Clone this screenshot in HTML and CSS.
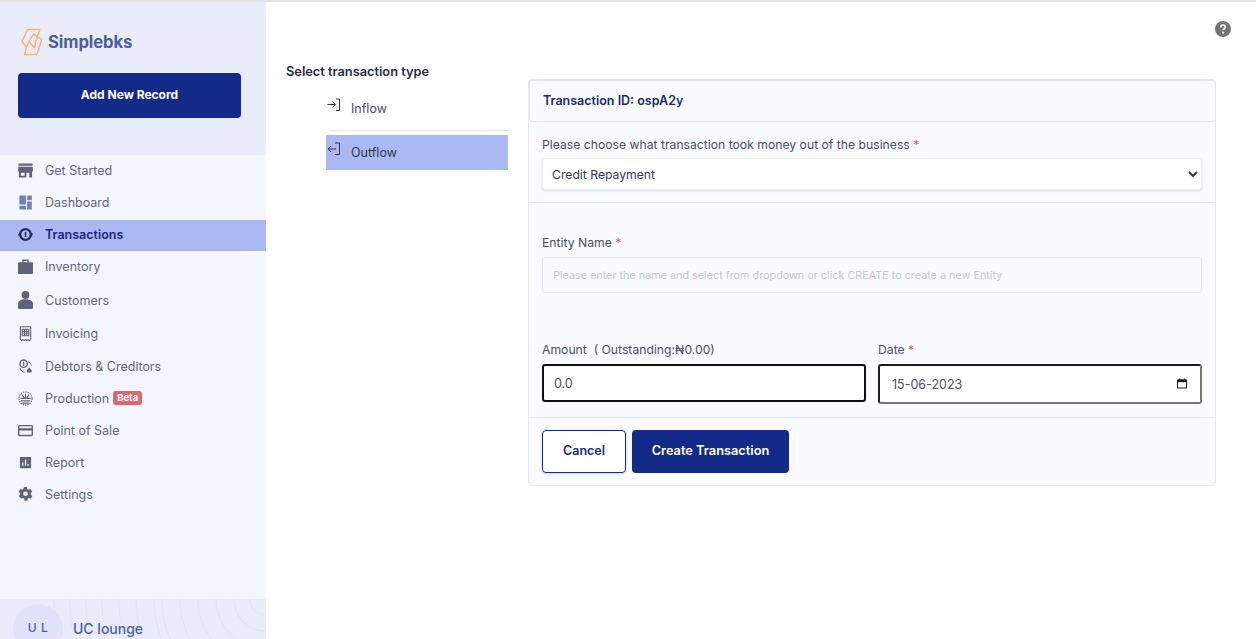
FILE: index.html
```html
<!DOCTYPE html>
<html lang="en">
<head>
<meta charset="utf-8">
<title>Simplebks</title>
<link rel="stylesheet" href="styles.css">
</head>
<body>
<div class="app">
  <aside class="sidebar">
    <div class="side-head">
      <div class="brand">
        <svg class="brand-mark" viewBox="0 0 22 28" fill="none" stroke="#f6b26f" stroke-width="1.400" stroke-linejoin="round"><path d="M6.500 1.500H18.800L15.300 11.500"/><path d="M6.500 1.500L1 13.500 5.500 19 8 13.500 12.500 6 20.700 11.500 15.800 26.500H3.500L5.500 19"/><path d="M8 13.500L13.500 20 15.300 11.500"/></svg>
        <span class="brand-name">Simplebks</span>
      </div>
      <button class="add-btn" type="button">Add New Record</button>
    </div>
    <nav class="nav">
      <a class="nav-item"><svg class="ico" viewBox="0 0 16 16"><path fill="#5f6378" d="M0.500 0.500h15v2.500H.5zM0.300 4h15.400L16 9h-1v6.500h-3V10.500H9v5H1V9H0zM3 10.500v3h4v-3z"/></svg>Get Started</a>
      <a class="nav-item"><svg class="ico" viewBox="0 0 16 16"><path fill="#6f80bd" d="M1.500 0.500h7v9.500h-7zM9.700 0.500h5v5h-5zM9.700 7h5v8.500h-5zM1.500 11.500h7v4h-7z"/></svg>Dashboard</a>
      <a class="nav-item active"><svg class="ico" viewBox="0 0 16 16"><circle cx="8" cy="8" r="5.700" fill="none" stroke="#282d52" stroke-width="2.400"/><path fill="#282d52" d="M-.3 9l2-3.500L3.700 9zM12.300 7l2 3.500L16.300 7zM7.200 5.300h1.600v5.400H7.200z"/></svg>Transactions</a>
      <a class="nav-item"><svg class="ico" viewBox="1 1 14 14"><path fill="#5f6378" d="M5 1.500h6V4h3a1 1 0 0 1 1 1v9a1 1 0 0 1-1 1H2a1 1 0 0 1-1-1V5a1 1 0 0 1 1-1h3zM6.300 2.800V4h3.400V2.800z"/></svg>Inventory</a>
      <a class="nav-item nav-person"><svg class="ico ico-person" viewBox="0 0 15 18"><circle cx="7.500" cy="4" r="3.900" fill="#5f6378"/><path fill="#5f6378" d="M0 13c0-3 3-4.700 7.500-4.700S15 10 15 13v3.500a1.500 1.500 0 0 1-1.500 1.500h-12A1.500 1.500 0 0 1 0 16.500z"/></svg>Customers</a>
      <a class="nav-item"><svg class="ico" viewBox="0 0 16 16" fill="none" stroke="#5f6378"><path d="M2.500 0.800h11V14.500l-1.400 1-1.300-1-1.400 1-1.400-1-1.400 1-1.300-1-1.400 1-1.300-1z" stroke-width="1.200"/><path d="M4.500 3.500h7v7h-7zM4.500 6h7M4.500 8.300h7M7 3.500v7M9.300 3.500v7" stroke-width="1.100"/></svg>Invoicing</a>
      <a class="nav-item nav-mid"><svg class="ico" viewBox="0 0 16 16"><circle cx="6" cy="5" r="3.900" fill="none" stroke="#5f6378" stroke-width="1.500"/><path fill="#5f6378" d="M5.300 2.800h1.400v4.400H5.300zM9.500 12l2.500-3 2.500 3v2.500h-5z"/><path d="M2 9.500c.6 2.700 2.500 4.300 5 4.800M10.500 2.800c2 .7 3.200 2 3.700 4.200" fill="none" stroke="#5f6378"/></svg>Debtors &amp; Creditors</a>
      <a class="nav-item"><svg class="ico" viewBox="0 0 16 16" fill="none" stroke="#5f6378"><circle cx="8" cy="8" r="7" stroke-dasharray="1.500 1" stroke-width="1.200"/><path d="M2.500 8h11M3 10.500h10M4.500 13h7M4.500 4l2.500 4M8 3v5M11.500 4L9 8" stroke-width="1.300"/></svg>Production<span class="beta">Beta</span></a>
      <a class="nav-item"><svg class="ico" viewBox="0 0 16 16"><path fill="#5f6378" fill-rule="evenodd" d="M1.500 2h13A1.500 1.500 0 0 1 16 3.500v9a1.500 1.500 0 0 1-1.500 1.500h-13A1.500 1.500 0 0 1 0 12.500v-9A1.500 1.500 0 0 1 1.500 2zM1.500 3.500v2h13v-2zM1.500 8v4.500h13V8z"/></svg>Point of Sale</a>
      <a class="nav-item"><svg class="ico" viewBox="0 0 16 16"><path fill="#5f6378" fill-rule="evenodd" d="M2 2h12v12H2zM4.500 8v3.500h1.300V8zM7.400 5v6.500h1.300V5zM10.200 9.500v2h1.300v-2z"/></svg>Report</a>
      <a class="nav-item"><svg class="ico" viewBox="0 0 16 16"><path fill="#5f6378" fill-rule="evenodd" d="M6.500 0h3l.4 2.200 1.300.7 2.100-.8L15.300 5l-1.600 1.400v1.500l1.600 1.600-1.500 2.800-2.100-.7-1.300.7-.4 2.300h-3l-.4-2.300-1.300-.7-2.100.7L.7 9.500l1.600-1.600V6.400L.7 5l1.500-2.900 2.100.8 1.300-.7zM8 4.700a2.500 2.500 0 1 0 0 5 2.500 2.500 0 0 0 0-5z"/></svg>Settings</a>
    </nav>
    <div class="side-foot">
      <svg class="foot-rings" viewBox="0 0 266 40" fill="none" stroke="#dde1ec" stroke-dasharray="2 1"><circle cx="266" cy="0" r="16"/><circle cx="266" cy="0" r="32"/><circle cx="266" cy="0" r="50"/><circle cx="266" cy="0" r="68"/><circle cx="266" cy="0" r="86"/><circle cx="266" cy="0" r="104"/><circle cx="266" cy="0" r="112"/><circle cx="266" cy="0" r="130"/><circle cx="266" cy="0" r="147"/><circle cx="266" cy="0" r="164"/><circle cx="266" cy="0" r="180"/><circle cx="266" cy="0" r="196"/><circle cx="266" cy="0" r="212"/></svg>
      <div class="avatar">U L</div>
      <span class="org">UC lounge</span>
    </div>
  </aside>

  <main class="main">
    <div class="help-row">
      <svg class="help" viewBox="0 0 16 16"><circle cx="8" cy="8" r="8" fill="#757575"/><path d="M5.700 6.200C5.800 4.800 6.800 4.200 8 4.200c1.400 0 2.300.8 2.300 1.900 0 1.700-2.200 1.600-2.200 3.200" fill="none" stroke="#fff" stroke-width="1.700"/><circle cx="8.100" cy="11.700" r="1.100" fill="#fff"/></svg>
    </div>
    <div class="content">
      <section class="types">
        <h2 class="types-title">Select transaction type</h2>
        <div class="type-list">
          <a class="type-item">
            <svg class="type-ico" viewBox="0 0 14 14" fill="none" stroke="#33384f"><path d="M0.500 6.500h8M5.500 3.500l3 3-3 3M9 1h3.500v11.500H9"/></svg>
            Inflow
          </a>
          <div class="type-rule"></div>
          <a class="type-item selected">
            <svg class="type-ico" viewBox="0 0 14 14" fill="none" stroke="#33384f"><path d="M1 7h8M4 4L1 7l3 3M8 1h4.500v11.500H8"/></svg>
            Outflow
          </a>
        </div>
      </section>

      <form class="card">
        <header class="card-head">Transaction ID: ospA2y</header>
        <div class="block block-choose">
          <label class="label">Please choose what transaction took money out of the business <span class="req">*</span></label>
          <select class="select"><option>Credit Repayment</option></select>
        </div>
        <div class="block block-fields">
          <label class="label">Entity Name <span class="req">*</span></label>
          <input class="text-input" type="text" placeholder="Please enter the name and select from dropdown or click CREATE to create a new Entity">
          <div class="two-col">
            <div class="col">
              <label class="label">Amount &nbsp;( Outstanding:₦0.00)</label>
              <input class="strong-input amount" type="text" value="0.0">
            </div>
            <div class="col">
              <label class="label">Date <span class="req">*</span></label>
              <div class="date-wrap">
                <input class="strong-input date" type="text" value="15-06-2023">
                <svg class="cal" viewBox="0 0 12 12"><path fill="#1c1c1c" fill-rule="evenodd" d="M2.500 0h1.300v1h4.400V0h1.300v1H11a1 1 0 0 1 1 1v9a1 1 0 0 1-1 1H1a1 1 0 0 1-1-1V2a1 1 0 0 1 1-1h1.500zM1.200 4.500v6.300h9.600V4.500z"/></svg>
              </div>
            </div>
          </div>
        </div>
        <footer class="card-foot">
          <button class="btn btn-cancel" type="button">Cancel</button>
          <button class="btn btn-create" type="button">Create Transaction</button>
        </footer>
      </form>
    </div>
  </main>
</div>
</body>
</html>
```
FILE: styles.css
```css
* { box-sizing: border-box; }
html, body { height: 100%; margin: 0; }
body {
  font-family: Inter, "Noto Sans", sans-serif;
  color: #33384f;
  background: #fff;
  overflow: hidden;
}
.app {
  display: flex;
  height: 639px;
  border-top: 2px solid #e4e4e6;
  overflow: hidden;
}
.sidebar {
  width: 266px;
  flex: none;
  display: flex;
  flex-direction: column;
  background: #f3f6fe;
}
.side-head {
  height: 153px;
  flex: none;
  background: #e9edfb;
  padding: 25px 25px 0 18px;
}
.brand {
  display: flex;
  align-items: center;
  gap: 5px;
  height: 30px;
  padding-left: 3px;
}
.brand-mark { width: 22px; height: 28px; }
.brand-name {
  font-size: 16.700px;
  font-weight: 700;
  color: #4a5ea6;
  letter-spacing: -0.1px;
}
.add-btn {
  display: block;
  width: 223px;
  height: 45px;
  margin-top: 16px;
  padding: 0 0 2px;
  border: 0;
  border-radius: 4px;
  background: #132a89;
  color: #fff;
  font: 700 12px Inter, sans-serif;
}
.nav {
  flex: 1;
}
.nav-item {
  display: flex;
  align-items: center;
  height: 32px;
  padding: 0 0 2px 18px;
  font-size: 12.500px;
  color: #62667c;
}
.nav-person {
  height: 34px;
  margin-top: 1px;
}
.nav-mid { margin-top: 1px; }
.nav-item.active {
  height: 31px;
  margin-top: 1px;
  background: #aab9f1;
  color: #1b2a80;
  font-weight: 600;
}
.ico {
  width: 15px;
  height: 15px;
  flex: none;
  margin-right: 12px;
  overflow: visible;
}
.ico-person { height: 18px; }
.beta {
  margin-left: 4px;
  padding: 0 4px;
  height: 14px;
  line-height: 14px;
  border-radius: 3px;
  background: #e2646f;
  color: #fff;
  font-size: 9.500px;
  font-weight: 700;
}
.side-foot {
  position: relative;
  height: 40px;
  flex: none;
  display: flex;
  align-items: flex-start;
  background: #e9edfb;
  overflow: hidden;
  padding: 5px 0 0 13px;
}
.foot-rings { position: absolute; left: 0; top: 0; width: 266px; height: 40px; }
.avatar {
  position: relative;
  width: 50px;
  height: 50px;
  flex: none;
  border-radius: 50%;
  background: #dfe4fb;
  color: #4a5ea6;
  font-size: 12px;
  font-weight: 500;
  letter-spacing: 0.5px;
  text-align: center;
  line-height: 48px;
}
.org {
  position: relative;
  margin: 16px 0 0 10px;
  font-size: 14px;
  font-weight: 500;
  color: #4a5ea6;
}

.main {
  flex: 1;
  min-width: 0;
  padding: 19px 40px 0 20px;
}
.help-row {
  display: flex;
  justify-content: flex-end;
  height: 16px;
  margin-right: -15px;
}
.help { width: 16px; height: 16px; }
.content {
  display: flex;
  align-items: flex-start;
}
.types { width: 242px; flex: none; }
.types-title {
  margin: 27px 0 0;
  font-size: 12.800px;
  font-weight: 600;
  line-height: 16px;
  color: #2a2d3e;
}
.type-list { margin: 11px 0 0 40px; width: 186px; }
.type-item {
  display: flex;
  align-items: center;
  width: 182px;
  height: 35px;
  font-size: 12.500px;
  color: #4a4e63;
  position: relative;
  padding-left: 25px;
}
.type-ico { position: absolute; left: 1px; top: 7px; width: 14px; height: 14px; }
.type-rule { height: 1px; background: #e3e6ee; margin: 4px 0 4px 4px; }
.selected { background: #aab9f1; color: #33384f; }

.card {
  width: 688px;
  margin-top: 42px;
  background: #fafbfe;
  border: 1px solid #e3e7ef;
  border-radius: 4px;
}
.card-head {
  height: 43px;
  border: 1px solid #e3e7ef;
  border-width: 2px 1px 1px 1px;
  margin: -1px -1px 0 0;
  border-radius: 4px;
  padding: 11px 0 0 13px;
  font-size: 12.500px;
  font-weight: 600;
  line-height: 18px;
  color: #1b2a6f;
}
.block { padding: 0 13px; }
.block-choose {
  height: 81px;
  padding-top: 15px;
  border-bottom: 1px solid #e3e7ef;
}
.label {
  display: block;
  font-size: 12.200px;
  line-height: 16px;
  color: #4a4e63;
}
.req { color: #ef4b55; }
.select {
  display: block;
  width: 660px;
  height: 32px;
  margin-top: 5px;
  padding: 0 5px;
  border: 1px solid #eef0f5;
  border-radius: 3px;
  background-color: #fff;
  box-shadow: 0 1px 2px rgba(60, 70, 110, .18);
  font: 12.200px Inter, sans-serif;
  color: #33384f;
}
.block-fields {
  height: 215px;
  padding-top: 32px;
  border-bottom: 1px solid #e3e7ef;
}
.text-input {
  display: block;
  width: 660px;
  height: 36px;
  margin-top: 6px;
  padding: 0 10px;
  border: 1px solid #e6e9f0;
  border-radius: 3px;
  background: transparent;
  font: 10.800px Inter, sans-serif;
}
.text-input::placeholder { color: #c5c7cf; opacity: 1; }
.two-col {
  display: flex;
  gap: 12px;
  margin-top: 49px;
}
.col { flex: none; width: 324px; }
.col .label { margin-bottom: 6px; }
.strong-input {
  display: block;
  width: 100%;
  height: 38px;
  padding: 0 10px;
  background: #fff;
  border-radius: 3px;
  font: 12.500px Inter, sans-serif;
  color: #4a4e63;
}
.amount { border: 2px solid #101010; }
.date-wrap { position: relative; }
.date {
  height: 40px;
  padding-left: 12px;
  border: 2px solid;
  border-color: #1c1c1c #767676 #767676 #1c1c1c;
}
.cal { position: absolute; right: 15px; top: 14px; width: 10px; height: 11px; }
.card-foot {
  display: flex;
  gap: 6px;
  padding: 12px 13px;
}
.btn {
  height: 43px;
  padding: 0 0 3px;
  border-radius: 4px;
  font-family: Inter, sans-serif;
  font-weight: 600;
}
.btn-cancel {
  width: 84px;
  border: 1px solid #132a89;
  background: #fff;
  color: #132a89;
  font-size: 12.500px;
  box-shadow: 0 1px 3px rgba(60, 70, 110, .2);
}
.btn-create {
  width: 157px;
  border: 0;
  background: #132a89;
  color: #fff;
  font-size: 12.800px;
}
```
